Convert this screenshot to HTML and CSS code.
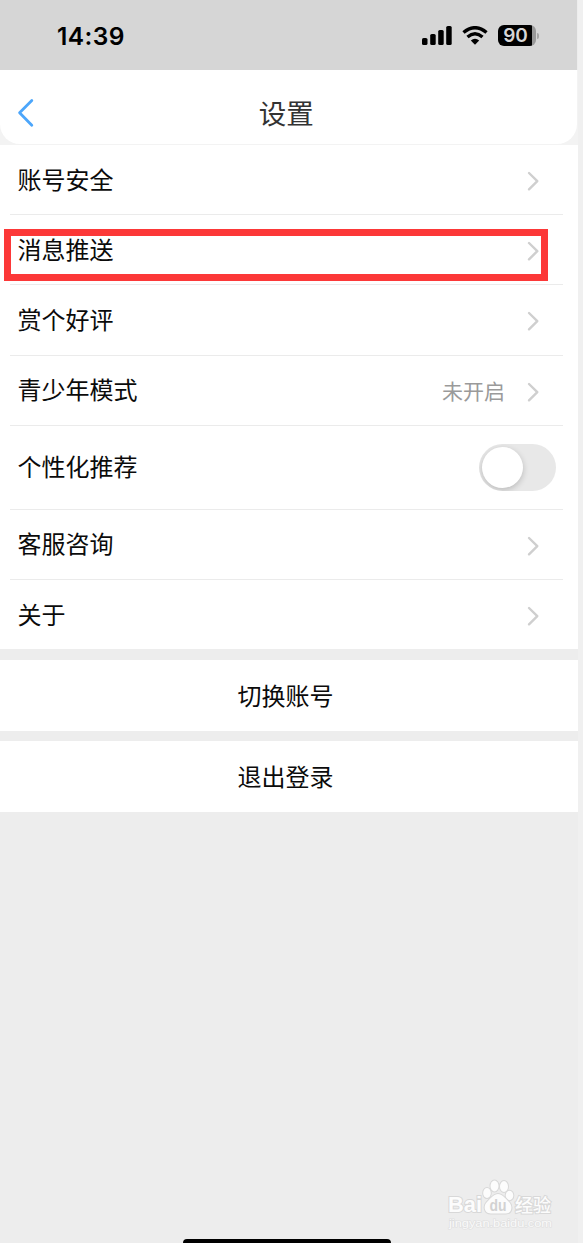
FILE: index.html
```html
<!DOCTYPE html>
<html lang="zh-CN">
<head>
<meta charset="utf-8">
<title>设置</title>
<link rel="stylesheet" href="styles.css">
</head>
<body>
<div class="screen">
  <header class="status">
    <span class="time">14:39</span>
    <div class="indicators">
      <svg class="signal" width="30" height="19" viewBox="0 0 30 19">
        <rect x="0" y="12" width="5.5" height="7" rx="1.6"/>
        <rect x="8.2" y="8" width="5.5" height="11" rx="1.6"/>
        <rect x="16.2" y="4" width="5.5" height="15" rx="1.6"/>
        <rect x="24.2" y="0" width="5.5" height="19" rx="1.6"/>
      </svg>
      <svg class="wifi" width="26" height="19" viewBox="0 0 26 19">
        <path d="M1.5 6.5Q13-3 24.500 6.500" fill="none" stroke="#000" stroke-width="3.5"/>
        <path d="M5.500 11Q13 4.700 20.500 11" fill="none" stroke="#000" stroke-width="3.4"/>
        <path d="M8.8 14.4Q13 11.2 17.2 14.4L13 18.8Z"/>
      </svg>
      <div class="battery"><span class="level">90</span></div>
      <span class="battery-tip"></span>
    </div>
  </header>
  <div class="nav-back">
    <nav class="nav">
      <svg class="back" width="18" height="30" viewBox="0 0 18 30"><path d="M14.8 2.6L2.6 14.8L14.8 27.2" fill="none" stroke="#4ca6fb" stroke-width="2.8" stroke-linecap="round" stroke-linejoin="round"/></svg>
      <h1 class="title">设置</h1>
    </nav>
  </div>
  <main>
    <section class="list">
      <div class="row"><span class="label">账号安全</span><svg class="chevron" width="13" height="20" viewBox="0 0 13 20"><path d="M2 2L10.3 10.2L2 18.3"/></svg></div>
      <div class="row"><span class="label">消息推送</span><svg class="chevron" width="13" height="20" viewBox="0 0 13 20"><path d="M2 2L10.3 10.2L2 18.3"/></svg><div class="highlight"></div></div>
      <div class="row"><span class="label">赏个好评</span><svg class="chevron" width="13" height="20" viewBox="0 0 13 20"><path d="M2 2L10.3 10.2L2 18.3"/></svg></div>
      <div class="row"><span class="label">青少年模式</span><span class="value">未开启</span><svg class="chevron" width="13" height="20" viewBox="0 0 13 20"><path d="M2 2L10.3 10.2L2 18.3"/></svg></div>
      <div class="row row-switch"><span class="label">个性化推荐</span><div class="switch"><span class="knob"></span></div></div>
      <div class="row"><span class="label">客服咨询</span><svg class="chevron" width="13" height="20" viewBox="0 0 13 20"><path d="M2 2L10.3 10.2L2 18.3"/></svg></div>
      <div class="row"><span class="label">关于</span><svg class="chevron" width="13" height="20" viewBox="0 0 13 20"><path d="M2 2L10.3 10.2L2 18.3"/></svg></div>
    </section>
    <div class="action">切换账号</div>
    <div class="action">退出登录</div>
  </main>
  <svg class="watermark" width="116" height="62" viewBox="0 0 116 62">
    <g class="mark">
      <text x="5" y="42" class="brand" textLength="34" lengthAdjust="spacingAndGlyphs">Bai</text>
      <ellipse cx="44" cy="23" rx="3.8" ry="5"/>
      <ellipse cx="51.500" cy="16" rx="4" ry="5.4"/>
      <ellipse cx="61" cy="16.500" rx="4" ry="5.400"/>
      <ellipse cx="66.500" cy="25.500" rx="3.800" ry="4.700"/>
      <path d="M55 24C59 24 62 28 66 32C70 36 69 43.500 63 43.500L48 43.500C41 43.500 40 36 44 32C48 28 51 24 55 24Z"/>
      <text x="72" y="42" class="cn" textLength="36" lengthAdjust="spacingAndGlyphs">经验</text>
    </g>
    <text x="46.500" y="40.500" class="du" textLength="17" lengthAdjust="spacingAndGlyphs">du</text>
    <text x="6" y="56.500" class="domain" textLength="103" lengthAdjust="spacingAndGlyphs">jingyan.baidu.com</text>
  </svg>
  <div class="home"></div>
</div>
</body>
</html>
```
FILE: styles.css
```css
* { box-sizing: border-box; }
body {
  margin: 0;
  background: #f0f0f0;
  font-family: "Noto Sans CJK SC", sans-serif;
  color: #0b0b0b;
}
.screen {
  position: relative;
  width: 578px;
  height: 1243px;
  overflow: hidden;
  background: #ededed;
}
.status {
  display: flex;
  align-items: flex-start;
  justify-content: space-between;
  width: 576.5px;
  height: 70px;
  padding: 0 39px 0 57px;
  background: #d6d6d6;
}
.time {
  margin-top: 20px;
  font: 600 24.500px/33px Inter, sans-serif;
  letter-spacing: 0.4px;
  color: #000;
}
.indicators { display: flex; padding-top: 25px; }
.signal { margin-top: 1px; }
.wifi { margin: 1px 10px 0 10px; }
.battery {
  width: 38px;
  height: 21px;
  border-radius: 6px;
  background: linear-gradient(to right, #000 34.500px, #999 34.500px);
}
.level {
  display: block;
  width: 36px;
  text-align: center;
  font: 600 19px/21px Inter, sans-serif;
  color: #d6d6d6;
}
.battery-tip {
  width: 2px;
  height: 6px;
  margin: 8px -1px 0 1px;
  border-radius: 0 3px 3px 0;
  background: #a6a6a6;
}
.nav-back { height: 75px; background: #f3f3f3; }
.nav {
  display: grid;
  grid-template-columns: 80px 1fr 80px;
  align-items: center;
  width: 576.5px;
  height: 74px;
  padding-top: 11px;
  border-radius: 0 0 20px 20px;
  background: #fff;
}
.back { margin-left: 17px; }
.title {
  margin: 0 4px 2px 0;
  text-align: center;
  font-size: 27.5px;
  line-height: 40px;
  font-weight: 400;
  color: #333;
}
.list { margin-bottom: 10.500px; background: #fff; }
.row {
  position: relative;
  display: flex;
  align-items: center;
  height: 70.200px;
  margin: 0 15px 0 10px;
  padding: 0 23px 0 7.500px;
  border-bottom: 1.500px solid #ebebeb;
  font-size: 24px;
  line-height: 36px;
}
.row:last-child { border-bottom: 0; height: 69.500px; }
.row-switch { height: 84px; padding-right: 7px; }
.label { margin-bottom: 2px; }
.chevron { margin: 3px 0 0 auto; fill: none; stroke: #cfcfcf; stroke-width: 2.400px; stroke-linecap: round; stroke-linejoin: round; }
.value { margin: 0 0 1px auto; font-size: 21px; color: #9a9a9a; }
.value + .chevron { margin-left: 22px; }
.highlight {
  position: absolute;
  left: -6px;
  top: 14px;
  width: 544px;
  height: 52px;
  border: 7px solid #fc3838;
}
.switch {
  width: 77px;
  height: 47px;
  margin-left: auto;
  padding: 3px;
  border-radius: 24px;
  background: #e8e8e8;
  overflow: hidden;
}
.knob {
  display: block;
  width: 41px;
  height: 41px;
  border-radius: 50%;
  background: #fff;
  box-shadow: 0 2px 6px rgba(0, 0, 0, .2);
}
.action {
  height: 71px;
  margin-bottom: 10.500px;
  padding-right: 7px;
  background: #fff;
  text-align: center;
  font-size: 24px;
  line-height: 70px;
}
.watermark { position: absolute; left: 443px; top: 1170px; }
.mark { fill: #fcfcfc; stroke: #d8d8d8; stroke-width: 2px; paint-order: stroke; }
.brand { font: 700 22px "Liberation Sans", sans-serif; }
.cn { font: 500 18px "Noto Sans CJK SC", sans-serif; }
.du { font: 700 16px "Liberation Sans", sans-serif; fill: #d2d2d2; }
.domain { font: 400 11px "Liberation Sans", sans-serif; fill: #fafafa; stroke: #dfdfdf; stroke-width: 1.200px; paint-order: stroke; }
.home {
  position: absolute;
  left: 183px;
  bottom: -4px;
  width: 208px;
  height: 8px;
  border-radius: 4px;
  background: #000;
}
```
